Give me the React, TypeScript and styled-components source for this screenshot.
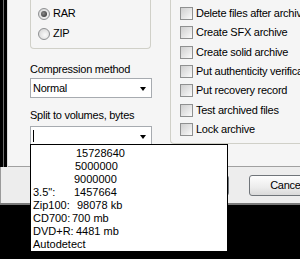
import React from 'react';
import styled, { createGlobalStyle } from 'styled-components';

const Global = createGlobalStyle`
  html, body { margin: 0; padding: 0; background: #000; }
  body {
    width: 300px; height: 259px; overflow: hidden;
    font-family: "Liberation Sans", Arial, sans-serif;
    font-size: 11px; color: #000;
  }
  * { box-sizing: border-box; }
`;

const Screen = styled.div`
  width: 300px; height: 259px; background: #000;
  overflow: hidden; display: flex; flex-direction: column;
`;

const Dialog = styled.div`
  height: 205px; flex: none; display: flex; flex-direction: column;
  background: #ededed; border-bottom: 2px solid #7a7a7a;
`;

const TabRow = styled.div`
  height: 167px; flex: none; display: flex;
`;

const LeftStrip = styled.div`
  width: 8px; flex: none;
  background: linear-gradient(to right, #000 3px, #6e6e6e 3px, #6e6e6e 4px, #000 4px, #000 7px, #dcdcdc 7px);
`;

const TabPage = styled.div`
  flex: 1; display: flex; padding-left: 22px;
  background: #f5f5f5; border-bottom: 1px solid #a0a0a0;
  letter-spacing: -0.25px;
`;

const LeftCol = styled.div`
  width: 122px; flex: none; display: flex; flex-direction: column;
`;

const FormatGroup = styled.div`
  width: 121px; height: 49px; border: 1px solid #d0d0c8; border-top: none;
  border-radius: 0 0 4px 4px; padding: 7px 0 0 7px;
  display: flex; flex-direction: column; gap: 7px;
`;

const OptRow = styled.label`
  display: flex; align-items: center; height: 13px; line-height: 13px; gap: 3px;
  white-space: nowrap;
`;

const RadioDot = styled.span<{ $on?: boolean }>`
  width: 12px; height: 12px; border-radius: 50%; flex: none;
  border: 1px solid #8e9092;
  background: radial-gradient(circle at 60% 60%, #fafafa 0%, #dcdcdc 70%, #c8c8c8 100%);
  display: flex; align-items: center; justify-content: center;
  &::after {
    content: ''; width: 6px; height: 6px; border-radius: 50%;
    background: ${p => (p.$on ? 'radial-gradient(circle at 40% 40%, #8a8a8a, #2a2a2a)' : 'transparent')};
  }
`;

const Check = styled.span`
  width: 13px; height: 13px; flex: none; border: 1px solid #8f9090;
  background: linear-gradient(135deg, #cfcfcf 0%, #e6e6e6 55%, #fbfbfb 100%);
`;

const FieldLabel = styled.div<{ $mt: number }>`
  margin-top: ${p => p.$mt}px; height: 13px; line-height: 13px;
  white-space: nowrap;
`;

const ComboWrap = styled.div<{ $mt: number }>`
  margin-top: ${p => p.$mt}px; position: relative; width: 122px;
`;

const Combo = styled.div`
  height: 20px; background: #fff; border: 1px solid #a7abb0;
  display: flex; align-items: center; padding-left: 2px; line-height: 13px;
`;

const ComboText = styled.span`
  flex: 1; display: flex; align-items: center;
`;

const Caret = styled.span`
  width: 1px; height: 12px; background: #000;
`;

const Arrow = styled.span`
  width: 0; height: 0; margin-right: 5px; margin-top: 1px;
  border-left: 3.5px solid transparent; border-right: 3.5px solid transparent;
  border-top: 4px solid #000;
`;

const DropList = styled.div`
  position: absolute; left: 0; top: 18px; width: 198px; z-index: 5;
  background: #fff; border: 1px solid #000; padding: 2px 1px 0 1px;
  letter-spacing: 0;
`;

const Item = styled.div<{ $col: number }>`
  display: grid; grid-template-columns: ${p => p.$col}px auto;
  height: 13px; line-height: 13px; white-space: pre; padding-left: 1px;
`;

const RightCol = styled.div`
  margin-left: 18px; flex: 1; min-width: 0;
`;

const OptionsGroup = styled.div`
  height: 144px; border-left: 1px solid #d0d0c8; border-bottom: 1px solid #d0d0c8;
  border-bottom-left-radius: 4px; padding: 7px 0 0 9px;
  display: grid; grid-auto-rows: 19.33px; align-items: start;
`;

const BottomArea = styled.div`
  flex: 1; display: flex; padding: 8px 0 0 153px; gap: 20px;
  border-left: 1px solid #9a9a9a;
`;

const Button = styled.div`
  width: 75px; height: 21px; flex: none; border: 1px solid #70757a; border-radius: 3px;
  background: linear-gradient(#fdfdfd, #ececec 60%, #dadada);
  display: flex; align-items: center; justify-content: center;
  letter-spacing: -0.25px; line-height: 13px;
`;

const listItems: { label: string; value: string; col: number }[] = [
  { label: '', value: '15728640', col: 43 },
  { label: '', value: '5000000', col: 42 },
  { label: '', value: '9000000', col: 41 },
  { label: '3.5":', value: '1457664', col: 41 },
  { label: 'Zip100:', value: '98078 kb', col: 44 },
  { label: 'CD700:', value: '700 mb', col: 39 },
  { label: 'DVD+R:', value: '4481 mb', col: 43 },
];

const options = [
  'Delete files after archiving',
  'Create SFX archive',
  'Create solid archive',
  'Put authenticity verification',
  'Put recovery record',
  'Test archived files',
  'Lock archive',
];

export default function App() {
  return (
    <Screen>
      <Global />
      <Dialog>
        <TabRow>
          <LeftStrip />
          <TabPage>
            <LeftCol>
              <FormatGroup>
                <OptRow><RadioDot $on />RAR</OptRow>
                <OptRow><RadioDot />ZIP</OptRow>
              </FormatGroup>
              <FieldLabel $mt={14}>Compression method</FieldLabel>
              <ComboWrap $mt={2}>
                <Combo><ComboText>Normal</ComboText><Arrow /></Combo>
              </ComboWrap>
              <FieldLabel $mt={11}>Split to volumes, bytes</FieldLabel>
              <ComboWrap $mt={4}>
                <Combo><ComboText><Caret /></ComboText><Arrow /></Combo>
                <DropList>
                  {listItems.map((it, i) => (
                    <Item key={i} $col={it.col}>
                      <span>{it.label}</span>
                      <span>{it.value}</span>
                    </Item>
                  ))}
                  <Item $col={0}><span />Autodetect</Item>
                </DropList>
              </ComboWrap>
            </LeftCol>
            <RightCol>
              <OptionsGroup>
                {options.map(o => (
                  <OptRow key={o}><Check />{o}</OptRow>
                ))}
              </OptionsGroup>
            </RightCol>
          </TabPage>
        </TabRow>
        <BottomArea>
          <Button>OK</Button>
          <Button>Cancel</Button>
          <Button>Help</Button>
        </BottomArea>
      </Dialog>
    </Screen>
  );
}
